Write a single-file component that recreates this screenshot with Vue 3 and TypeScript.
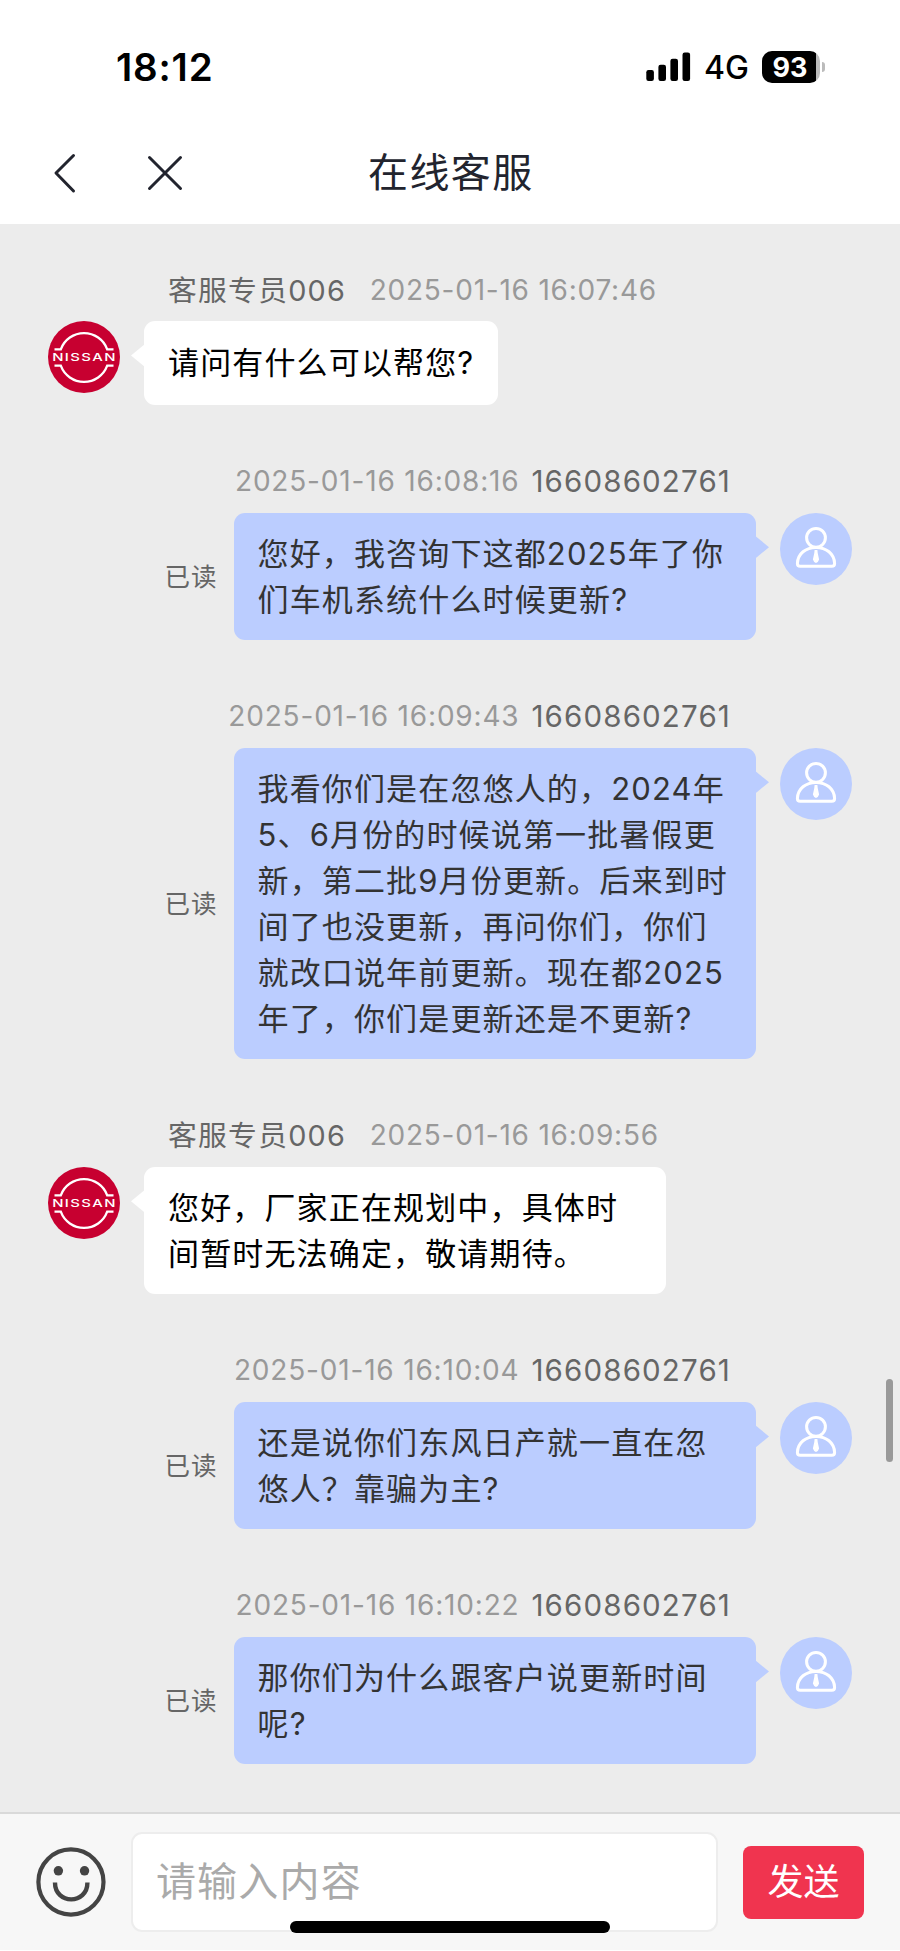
<script setup lang="ts">
interface Message {
  id: number
  from: 'agent' | 'user'
  name: string
  time: string
  lines: string[]
}

const phone = '16608602761'
const agent = '客服专员006'

const messages: Message[] = [
  { id: 1, from: 'agent', name: agent, time: '2025-01-16 16:07:46', lines: ['请问有什么可以帮您?'] },
  { id: 2, from: 'user', name: phone, time: '2025-01-16 16:08:16', lines: ['您好，我咨询下这都2025年了你', '们车机系统什么时候更新?'] },
  {
    id: 3,
    from: 'user',
    name: phone,
    time: '2025-01-16 16:09:43',
    lines: [
      '我看你们是在忽悠人的，2024年',
      '5、6月份的时候说第一批暑假更',
      '新，第二批9月份更新。后来到时',
      '间了也没更新，再问你们，你们',
      '就改口说年前更新。现在都2025',
      '年了，你们是更新还是不更新?',
    ],
  },
  { id: 4, from: 'agent', name: agent, time: '2025-01-16 16:09:56', lines: ['您好，厂家正在规划中，具体时', '间暂时无法确定，敬请期待。'] },
  { id: 5, from: 'user', name: phone, time: '2025-01-16 16:10:04', lines: ['还是说你们东风日产就一直在忽', '悠人？靠骗为主?'] },
  { id: 6, from: 'user', name: phone, time: '2025-01-16 16:10:22', lines: ['那你们为什么跟客户说更新时间', '呢?'] },
]
</script>

<template>
  <div class="screen">
    <header class="top">
      <div class="status">
        <span class="clock">18:12</span>
        <div class="indicators">
          <svg class="signal" width="46" height="30" viewBox="0 0 46 30">
            <rect x="0.3" y="18" width="7.6" height="11" rx="2.2" />
            <rect x="12.4" y="12.8" width="7.6" height="16.2" rx="2.2" />
            <rect x="24.4" y="6.8" width="7.6" height="22.2" rx="2.2" />
            <rect x="36.5" y="0.6" width="7.6" height="28.4" rx="2.2" />
          </svg>
          <span class="network">4G</span>
          <div class="battery"><span class="level">93</span></div>
          <i class="nub"></i>
        </div>
      </div>
      <nav class="nav">
        <svg class="back" width="24" height="42" viewBox="0 0 24 42">
          <path d="M20.5 3.5 L3 21 L20.5 39" />
        </svg>
        <svg class="close" width="38" height="38" viewBox="0 0 38 38">
          <path d="M3.5 3.5 L34.5 34.5 M34.5 3.5 L3.5 34.5" />
        </svg>
        <h1 class="title">在线客服</h1>
      </nav>
    </header>

    <main class="chat">
      <section v-for="m in messages" :key="m.id" class="message" :class="m.from">
        <div class="meta">
          <span class="name">{{ m.name }}</span>
          <time class="time">{{ m.time }}</time>
        </div>
        <div class="row">
          <svg v-if="m.from === 'agent'" class="avatar" viewBox="0 0 72 72">
            <circle cx="36" cy="36" r="36" fill="#c70030" />
            <g fill="none" stroke="#fff" stroke-width="2.3">
              <path d="M6.5 28.3 H12.8 A24.7 24.7 0 0 1 59.2 28.3 H65.5" />
              <path d="M6.5 44.7 H12.8 A24.7 24.7 0 0 0 59.2 44.7 H65.5" />
            </g>
            <text class="brand" x="4.2" y="40.1" textLength="64.6" lengthAdjust="spacingAndGlyphs">NISSAN</text>
          </svg>
          <svg v-else class="avatar" viewBox="0 0 72 72">
            <circle cx="36" cy="36" r="36" fill="#bbcdff" />
            <g fill="none" stroke="#fff" stroke-width="3">
              <circle cx="36" cy="24.8" r="9.4" />
              <path d="M20.2 53.2 H51.8 Q54.6 53.2 54.6 50.4 C54.2 40.6 46.2 34.4 36 34.4 C25.8 34.4 17.8 40.6 17.4 50.4 Q17.4 53.2 20.2 53.2 Z" />
            </g>
            <path d="M34.6 37 H37.4 L37.7 40 L39.1 46.6 Q38.4 49.3 36 50 Q33.6 49.3 32.9 46.6 L34.3 40 Z" fill="#fff" />
          </svg>
          <div class="bubble" :class="{ wide: m.lines.length > 1 }">
            <p v-for="(line, i) in m.lines" :key="i">{{ line }}</p>
          </div>
          <span v-if="m.from === 'user'" class="read">已读</span>
        </div>
      </section>
      <i class="scrollbar"></i>
    </main>

    <footer class="composer">
      <svg class="emoji" width="70" height="70" viewBox="0 0 70 70">
        <circle cx="35" cy="35" r="32.6" fill="none" stroke="#444" stroke-width="4.2" />
        <circle cx="22.4" cy="23.8" r="4.7" fill="#444" />
        <circle cx="48.6" cy="23.8" r="4.7" fill="#444" />
        <path d="M19 35.5 C19 58 51.5 58 51.5 35.5" fill="none" stroke="#444" stroke-width="4.4" />
      </svg>
      <div class="field">请输入内容</div>
      <button class="send" type="button">发送</button>
      <i class="home"></i>
    </footer>
  </div>
</template>

<style>
body {
  margin: 0;
  background: #fff;
}
</style>

<style scoped>
.screen {
  width: 900px;
  height: 1951px;
  display: flex;
  flex-direction: column;
  overflow: hidden;
  background: #fff;
  font-family: Inter, 'Noto Sans CJK SC', sans-serif;
}
.top {
  height: 224px;
  flex: none;
}
.status {
  display: flex;
  justify-content: space-between;
  align-items: center;
  height: 134px;
  padding: 0 75px 0 116px;
}
.clock {
  font-size: 38.5px;
  font-weight: 600;
  letter-spacing: 0.8px;
}
.indicators {
  display: flex;
  align-items: center;
}
.network {
  width: 58px;
  margin-left: 12px;
  font-size: 32px;
  font-weight: 500;
  line-height: 32px;
  position: relative;
  top: 1px;
}
.battery {
  width: 58px;
  height: 32px;
  border-radius: 10px;
  background: linear-gradient(to right, #000 54px, #bbb 54px);
  color: #fff;
  line-height: 33px;
  text-align: center;
}
.level {
  margin-right: 2px;
  font-size: 27px;
  font-weight: 700;
}
.nub {
  width: 3px;
  height: 10px;
  margin-left: 2px;
  border-radius: 0 5px 5px 0;
  background: #bbb;
}
.nav {
  display: flex;
  align-items: center;
  height: 78px;
  padding-left: 53px;
}
.back,
.close {
  fill: none;
  stroke: #22242e;
  stroke-width: 3;
  stroke-linecap: round;
  stroke-linejoin: round;
}
.close {
  margin-left: 69px;
}
.title {
  margin: 0 0 0 184px;
  color: #22242e;
  font-size: 40px;
  font-weight: 400;
  line-height: 50px;
  letter-spacing: 1.4px;
}
.chat {
  position: relative;
  flex: 1;
  min-height: 0;
  box-sizing: border-box;
  overflow: hidden;
  padding: 50.5px 48px 0;
  background: #ececec;
}
.message {
  margin-bottom: 61.2px;
}
.meta {
  display: flex;
  align-items: center;
  height: 30px;
  margin-bottom: 16.5px;
  padding: 0 120px;
  white-space: nowrap;
}
.name {
  margin-top: -3px;
  color: #666;
  font-size: 28.8px;
  letter-spacing: 1.25px;
}
.time {
  margin-left: 23.5px;
  color: #999;
  font-size: 28px;
  letter-spacing: 0.77px;
}
.row {
  display: flex;
}
.avatar {
  width: 72px;
  height: 72px;
  flex: none;
}
.brand {
  fill: #fff;
  font-size: 10.8px;
  font-weight: 500;
  letter-spacing: 1px;
}
.bubble {
  position: relative;
  box-sizing: border-box;
  min-height: 84px;
  margin: 0 24px;
  padding: 17.7px 24px;
  display: flex;
  flex-direction: column;
  justify-content: center;
  border-radius: 11px;
  background: #fff;
  color: #000;
  font-size: 31px;
  line-height: 46px;
  letter-spacing: 1.15px;
  white-space: nowrap;
}
.bubble.wide {
  width: 522px;
}
.bubble p {
  margin: 0;
  height: 46px;
}
.bubble::before {
  content: '';
  position: absolute;
  top: 23px;
  left: -13px;
  width: 14px;
  height: 23px;
  background: inherit;
  clip-path: polygon(0 50%, 100% 0, 100% 100%);
}
.user .meta,
.user .row {
  flex-direction: row-reverse;
}
.user .name {
  margin: 0 1px 0 0;
  font-size: 29.5px;
  letter-spacing: 1.15px;
}
.user .time {
  margin: 0 12px 0 0;
  letter-spacing: 0.82px;
}
.user .bubble {
  padding: 18.5px 24px 16.9px 23.5px;
  background: #bbcdff;
  color: #333;
}
.user .bubble::before {
  left: auto;
  right: -13px;
  transform: scaleX(-1);
}
.read {
  align-self: center;
  margin: -4px -7.5px 0 0;
  color: #666;
  font-size: 25.5px;
  letter-spacing: 1px;
}
.scrollbar {
  position: absolute;
  top: 1155px;
  right: 7px;
  width: 7px;
  height: 83px;
  border-radius: 4px;
  background: #999;
}
.composer {
  position: relative;
  flex: none;
  box-sizing: border-box;
  display: flex;
  align-items: center;
  height: 138px;
  margin-bottom: 1px;
  padding: 0 36px;
  border-top: 2px solid #d9d9d9;
  background: #f7f7f7;
}
.field {
  box-sizing: border-box;
  width: 588px;
  height: 100px;
  margin: 0 25px;
  padding-left: 23px;
  border: 2px solid #ededed;
  border-radius: 11px;
  background: #fff;
  color: #aaa;
  font-size: 40px;
  line-height: 96px;
  letter-spacing: 1.2px;
}
.send {
  width: 121px;
  height: 73px;
  padding: 0;
  border: 0;
  border-radius: 8px;
  background: #f0344f;
  color: #fff;
  font: inherit;
  font-size: 36px;
  line-height: 70px;
}
.home {
  position: absolute;
  left: 290px;
  bottom: 17px;
  width: 320px;
  height: 12px;
  border-radius: 6px;
  background: #000;
}
</style>
